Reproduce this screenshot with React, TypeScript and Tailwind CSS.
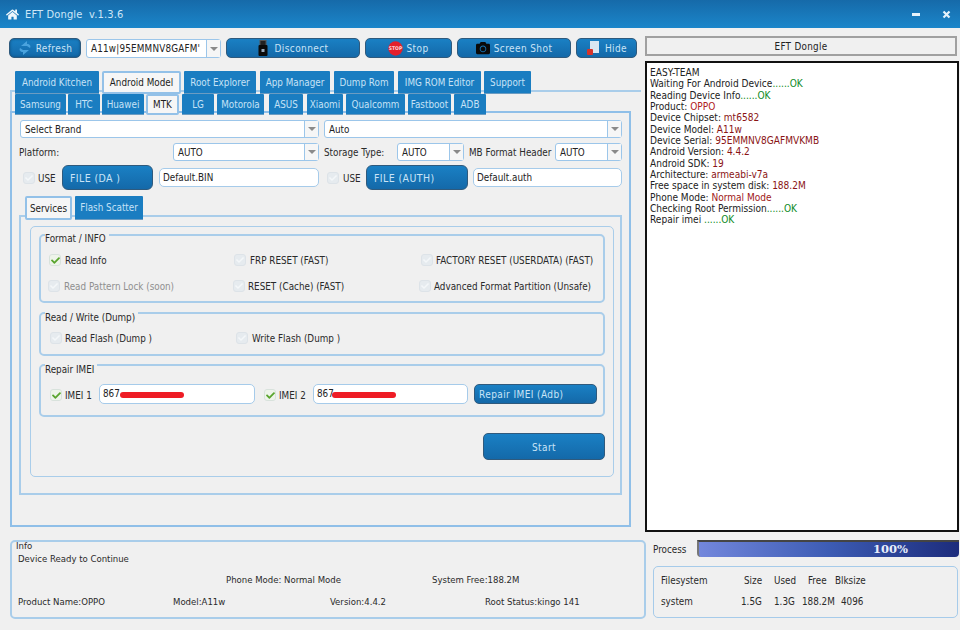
import { FaHome, FaCamera, FaCheck } from "react-icons/fa";

const mainTabs = [
  ["Android Kitchen", "left-[15px] w-[84px]", false],
  ["Android Model", "left-[102px] w-[79px]", true],
  ["Root Explorer", "left-[184px] w-[72px]", false],
  ["App Manager", "left-[260px] w-[70px]", false],
  ["Dump Rom", "left-[334px] w-[60px]", false],
  ["IMG ROM Editor", "left-[398px] w-[83px]", false],
  ["Support", "left-[484px] w-[47px]", false],
] as const;

const subTabs = [
  ["Samsung", "left-[15px] w-[51px]", false],
  ["HTC", "left-[68px] w-[32px]", false],
  ["Huawei", "left-[102px] w-[42px]", false],
  ["MTK", "left-[146px] w-[33px]", true],
  ["LG", "left-[182px] w-[32px]", false],
  ["Motorola", "left-[217px] w-[47px]", false],
  ["ASUS", "left-[269px] w-[34px]", false],
  ["Xiaomi", "left-[307px] w-[36px]", false],
  ["Qualcomm", "left-[346px] w-[59px]", false],
  ["Fastboot", "left-[408px] w-[43px]", false],
  ["ADB", "left-[454px] w-[32px]", false],
] as const;

const G = "text-[#0c8a1e]";
const R = "text-[#8a1414]";
const log: [string, string?, string?][] = [
  ["EASY-TEAM"],
  ["Waiting For Android Device", "......OK", G],
  ["Reading Device Info", "......OK", G],
  ["Product: ", "OPPO", "text-[#b02020]"],
  ["Device Chipset: ", "mt6582", R],
  ["Device Model: ", "A11w", R],
  ["Device Serial: ", "95EMMNV8GAFMVKMB", R],
  ["Android Version: ", "4.4.2", R],
  ["Android SDK: ", "19", R],
  ["Architecture: ", "armeabi-v7a", R],
  ["Free space in system disk: ", "188.2M", R],
  ["Phone Mode: ", "Normal Mode", "text-[#a01818]"],
  ["Checking Root Permission", "......OK", G],
  ["Repair imei ", "......OK", G],
];

function Check({ className, on }: { className: string; on?: boolean }) {
  return (
    <span className={`absolute w-[12px] h-[12px] rounded-[3px] flex items-center justify-center ${on ? "bg-[#eef4ea] border border-[#d8e2dc]" : "bg-[#e6ebef] border border-[#dde3e8]"} ${className}`}>
      <FaCheck className={on ? "text-[#5aa52e] w-[9px] h-[9px]" : "text-[#f4f7f9] w-[8px] h-[8px]"} />
    </span>
  );
}

function T({ className, children }: { className: string; children: React.ReactNode }) {
  return <span className={`absolute whitespace-nowrap leading-[16px] ${className}`}>{children}</span>;
}

const btn =
  "absolute flex items-center justify-center rounded-[5px] border border-[#2f5a7d] bg-gradient-to-b from-[#1a80c4] to-[#1469a9] text-[#c9e4f7] tracking-[0.4px] text-[10px]";

function Select({ className, label }: { className: string; label: string }) {
  return (
    <div className={`absolute flex items-stretch bg-white border border-[#9cc6ea] rounded-[3px] ${className}`}>
      <span className="flex-1 min-w-0 pl-[4px] pt-[2px] flex items-center overflow-hidden whitespace-nowrap text-[#222]">{label}</span>
      <span className="w-[14px] shrink-0 border-l border-[#9cc6ea] bg-[#f6f6f6] flex items-center justify-center">
        <span className="w-0 h-0 border-l-[4px] border-r-[4px] border-t-[4px] border-l-transparent border-r-transparent border-t-[#8a8a8a]" />
      </span>
    </div>
  );
}

function Input({ className, children }: { className: string; children: React.ReactNode }) {
  return (
    <div className={`absolute flex items-center pl-[3px] pt-[1px] bg-white border border-[#a6cbea] rounded-[5px] text-[#222] ${className}`}>
      {children}
    </div>
  );
}

function Tab({ label, cls, active, top, h }: { label: string; cls: string; active: boolean; top: string; h: string }) {
  return (
    <div
      className={`absolute flex items-center justify-center whitespace-nowrap pt-[2px] ${top} ${h} ${cls} ${
        active
          ? "bg-[#f6f6f6] border-2 border-[#93c1e8] rounded-[2px] text-[#1c1c1c] z-10"
          : "bg-[#1a7dc1] border-b border-[#6b9cc2] text-[#c6e2f6] rounded-t-[1px]"
      }`}
    >
      {label}
    </div>
  );
}

export default function App() {
  return (
    <div className="relative w-[960px] h-[630px] overflow-hidden bg-[#f0f0f0] text-[9.8px] text-[#2a2a2a] [font-family:DejaVu_Sans_Condensed,Liberation_Sans,sans-serif]">
      {/* title bar */}
      <div className="absolute left-0 top-0 w-[960px] h-[28px] bg-gradient-to-b from-[#166aa9] to-[#1b86ca] flex items-center">
        <FaHome className="ml-[6px] w-[13px] h-[13px] text-[#eef6fc]" />
        <span className="ml-[6px] pt-[2px] text-[11px] tracking-[0.15px] text-[#cfe7f8]">EFT Dongle&nbsp;&nbsp;v.1.3.6</span>
        <span className="absolute left-[912px] top-[13px] w-[8px] h-[3px] bg-[#e6f2fb]" />
        <svg className="absolute left-[942px] top-[10px]" width="9" height="9" viewBox="0 0 9 9">
          <path d="M1.5 1.5 L7.5 7.5 M7.5 1.5 L1.5 7.5" stroke="#e6f2fb" strokeWidth="2.2" />
        </svg>
      </div>

      {/* toolbar */}
      <div className={`${btn} left-[9px] top-[38px] w-[72px] h-[20px] gap-[4px] shadow-[inset_0_0_3px_#0d4f80]`}>
        <svg width="14" height="16" viewBox="0 0 14 16">
          <path d="M3 6 L9 1 L9 4 C12 4 13 6 12 8 L9 6 Z" fill="#4aa3de" />
          <path d="M11 10 L5 15 L5 12 C2 12 1 10 2 8 L5 10 Z" fill="#4aa3de" />
        </svg>
        Refresh
      </div>
      <Select className="left-[86px] top-[39px] w-[135px] h-[19px] tracking-[0.2px]" label="A11w|95EMMNV8GAFM'" />
      <div className={`${btn} left-[226px] top-[38px] w-[134px] h-[20px] gap-[7px]`}>
        <svg width="10" height="16" viewBox="0 0 10 16">
          <rect x="2" y="0.5" width="6" height="5.5" fill="#222" stroke="#555" />
          <rect x="0.5" y="5" width="9" height="11" rx="1" fill="#0b0b0b" />
          <rect x="3.5" y="9" width="3" height="3" fill="#9ab" />
        </svg>
        Disconnect
      </div>
      <div className={`${btn} left-[365px] top-[38px] w-[87px] h-[20px] gap-[3px]`}>
        <svg width="15" height="15" viewBox="0 0 15 15">
          <circle cx="7.5" cy="7.5" r="7.2" fill="#e3202c" />
          <text x="7.5" y="9.3" textAnchor="middle" fontSize="5" fontWeight="700" letterSpacing="0" fill="#fbdcdc">STOP</text>
        </svg>
        Stop
      </div>
      <div className={`${btn} left-[457px] top-[38px] w-[114px] h-[20px] gap-[4px]`}>
        <FaCamera className="w-[14px] h-[14px] text-[#0a0a0a]" />
        Screen Shot
      </div>
      <div className={`${btn} left-[576px] top-[38px] w-[61px] h-[20px] gap-[5px]`}>
        <svg width="14" height="15" viewBox="0 0 14 15">
          <rect x="4" y="0" width="9" height="12" fill="#dbe7f2" />
          <rect x="1" y="8" width="6" height="6" rx="1" fill="#d7342a" />
        </svg>
        Hide
      </div>

      {/* right column */}
      <div className="absolute left-[645px] top-[36px] w-[312px] h-[20px] border-2 border-[#a0a0a0] bg-[#f0f0f0] flex items-center justify-center pt-[2px] text-[#222] tracking-[0.3px]">
        EFT Dongle
      </div>
      <div className="absolute left-[645px] top-[61px] w-[314px] h-[471px] border-2 border-[#111] bg-white pl-[3px] pt-[4px] text-[10.05px] leading-[11.35px] text-[#222]">
        {log.map((l, i) => (
          <div key={i} className="whitespace-nowrap">
            {l[0]}
            {l[1] && <span className={l[2]}>{l[1]}</span>}
          </div>
        ))}
      </div>
      <T className="left-[653px] top-[542px]">Process</T>
      <div className="absolute left-[697px] top-[540px] w-[262px] h-[17px] rounded-b-[4px] border-l-2 border-t-2 border-l-[#777] border-t-[#444] bg-gradient-to-r from-[#7387dc] via-[#3d5cb4] via-50% to-[#1d2c7c] flex items-center pl-[174px] text-[11.5px] font-bold text-[#e8eefb] [font-family:DejaVu_Serif,serif]">
        100%
      </div>
      <div className="absolute left-[653px] top-[566px] w-[305px] h-[52px] border border-[#a6cbea] rounded-[5px]">
        <T className="left-[7px] top-[6px]">Filesystem</T>
        <T className="left-[90px] top-[6px]">Size</T>
        <T className="left-[120px] top-[6px]">Used</T>
        <T className="left-[154px] top-[6px]">Free</T>
        <T className="left-[181px] top-[6px]">Blksize</T>
        <T className="left-[7px] top-[27px]">system</T>
        <T className="left-[87px] top-[27px]">1.5G</T>
        <T className="left-[120px] top-[27px]">1.3G</T>
        <T className="left-[148px] top-[27px]">188.2M</T>
        <T className="left-[187px] top-[27px]">4096</T>
      </div>

      {/* outer pane */}
      <div className="absolute left-[10px] top-[90px] w-[631px] h-[22px] border-l-2 border-t-2 border-[#a9cdea]" />
      <div className="absolute left-[10px] top-[111px] w-[621px] h-[416px] border-2 border-[#8fbfe8]" />
      {mainTabs.map(([l, c, a]) => (
        <Tab key={l} label={l} cls={c} active={a} top="top-[71px]" h="h-[23px]" />
      ))}
      {subTabs.map(([l, c, a]) => (
        <Tab key={l} label={l} cls={c} active={a} top="top-[94px]" h="h-[21px]" />
      ))}

      {/* selectors */}
      <Select className="left-[20px] top-[120px] w-[299px] h-[18px]" label="Select Brand" />
      <Select className="left-[324px] top-[120px] w-[298px] h-[18px]" label="Auto" />
      <T className="left-[19px] top-[145px]">Platform:</T>
      <Select className="left-[173px] top-[143px] w-[146px] h-[18px]" label="AUTO" />
      <T className="left-[324px] top-[145px]">Storage Type:</T>
      <Select className="left-[397px] top-[143px] w-[67px] h-[18px]" label="AUTO" />
      <T className="left-[469px] top-[145px]">MB Format Header</T>
      <Select className="left-[555px] top-[143px] w-[67px] h-[18px]" label="AUTO" />

      <Check className="left-[23px] top-[172px]" />
      <T className="left-[38px] top-[171px]">USE</T>
      <div className={`${btn} left-[62px] top-[165px] w-[91px] h-[25px] !justify-start pl-[7px] pt-[2px] rounded-[6px] !text-[10.5px]`}>FILE (DA )</div>
      <Input className="left-[159px] top-[168px] w-[160px] h-[19px]">Default.BIN</Input>
      <Check className="left-[327px] top-[172px]" />
      <T className="left-[343px] top-[171px]">USE</T>
      <div className={`${btn} left-[366px] top-[165px] w-[102px] h-[25px] !justify-start pl-[7px] pt-[2px] rounded-[6px] !text-[10.5px]`}>FILE (AUTH)</div>
      <Input className="left-[473px] top-[168px] w-[149px] h-[19px]">Default.auth</Input>

      {/* services pane */}
      <div className="absolute left-[19px] top-[215px] w-[603px] h-[280px] border-2 border-[#a9cdea]" />
      <Tab label="Services" cls="left-[25px] w-[47px]" active={true} top="top-[196px]" h="h-[24px]" />
      <Tab label="Flash Scatter" cls="left-[75px] w-[68px]" active={false} top="top-[196px]" h="h-[24px]" />

      <div className="absolute left-[30px] top-[226px] w-[584px] h-[251px] border border-[#a9cdea] rounded-[5px]" />

      <div className="absolute left-[39px] top-[234px] w-[566px] h-[69px] border-2 border-[#a9cdea] rounded-[5px]" />
      <T className="left-[45px] top-[232px] bg-[#f0f0f0] pr-[3px] !leading-[14px]">Format / INFO</T>
      <Check className="left-[49px] top-[254px]" on />
      <T className="left-[65px] top-[253px]">Read Info</T>
      <Check className="left-[234px] top-[254px]" />
      <T className="left-[250px] top-[253px]">FRP RESET (FAST)</T>
      <Check className="left-[421px] top-[254px]" />
      <T className="left-[436px] top-[253px]">FACTORY RESET (USERDATA) (FAST)</T>
      <Check className="left-[48px] top-[280px]" />
      <T className="left-[64px] top-[279px] text-[#8f8f8f]">Read Pattern Lock (soon)</T>
      <Check className="left-[233px] top-[280px]" />
      <T className="left-[248px] top-[279px]">RESET (Cache) (FAST)</T>
      <Check className="left-[419px] top-[280px]" />
      <T className="left-[434px] top-[279px]">Advanced Format Partition (Unsafe)</T>

      <div className="absolute left-[39px] top-[312px] w-[566px] h-[44px] border-2 border-[#a9cdea] rounded-[5px]" />
      <T className="left-[45px] top-[311px] bg-[#f0f0f0] pr-[3px] !leading-[14px]">Read / Write (Dump)</T>
      <Check className="left-[50px] top-[332px]" />
      <T className="left-[65px] top-[331px]">Read Flash (Dump )</T>
      <Check className="left-[236px] top-[332px]" />
      <T className="left-[252px] top-[331px]">Write Flash (Dump )</T>

      <div className="absolute left-[39px] top-[364px] w-[566px] h-[53px] border-2 border-[#a9cdea] rounded-[5px]" />
      <T className="left-[45px] top-[363px] bg-[#f0f0f0] pr-[3px] !leading-[14px]">Repair IMEI</T>
      <Check className="left-[50px] top-[389px]" on />
      <T className="left-[65px] top-[388px]">IMEI 1</T>
      <Input className="left-[99px] top-[384px] w-[156px] h-[20px]">867</Input>
      <span className="absolute left-[120px] top-[392px] w-[64px] h-[6px] rounded-full bg-[#ee1c25]" />
      <Check className="left-[264px] top-[389px]" on />
      <T className="left-[279px] top-[388px]">IMEI 2</T>
      <Input className="left-[313px] top-[384px] w-[155px] h-[20px]">867</Input>
      <span className="absolute left-[332px] top-[392px] w-[64px] h-[6px] rounded-full bg-[#ee1c25]" />
      <div className={`${btn} left-[474px] top-[384px] w-[123px] h-[20px] !justify-start pl-[4px]`}>Repair IMEI (Adb)</div>
      <div className={`${btn} left-[483px] top-[433px] w-[122px] h-[27px] pt-[1px]`}>Start</div>

      {/* info */}
      <div className="absolute left-[10px] top-[540px] w-[636px] h-[79px] border-2 border-[#a9cdea] rounded-[5px]" />
      <div className="text-[9.5px]">
        <T className="left-[16px] top-[538px]">Info</T>
        <T className="left-[18px] top-[551px]">Device Ready to Continue</T>
        <T className="left-[226px] top-[572px]">Phone Mode: Normal Mode</T>
        <T className="left-[432px] top-[572px]">System Free:188.2M</T>
        <T className="left-[18px] top-[594px]">Product Name:OPPO</T>
        <T className="left-[173px] top-[594px]">Model:A11w</T>
        <T className="left-[330px] top-[594px]">Version:4.4.2</T>
        <T className="left-[485px] top-[594px]">Root Status:kingo 141</T>
      </div>
    </div>
  );
}
